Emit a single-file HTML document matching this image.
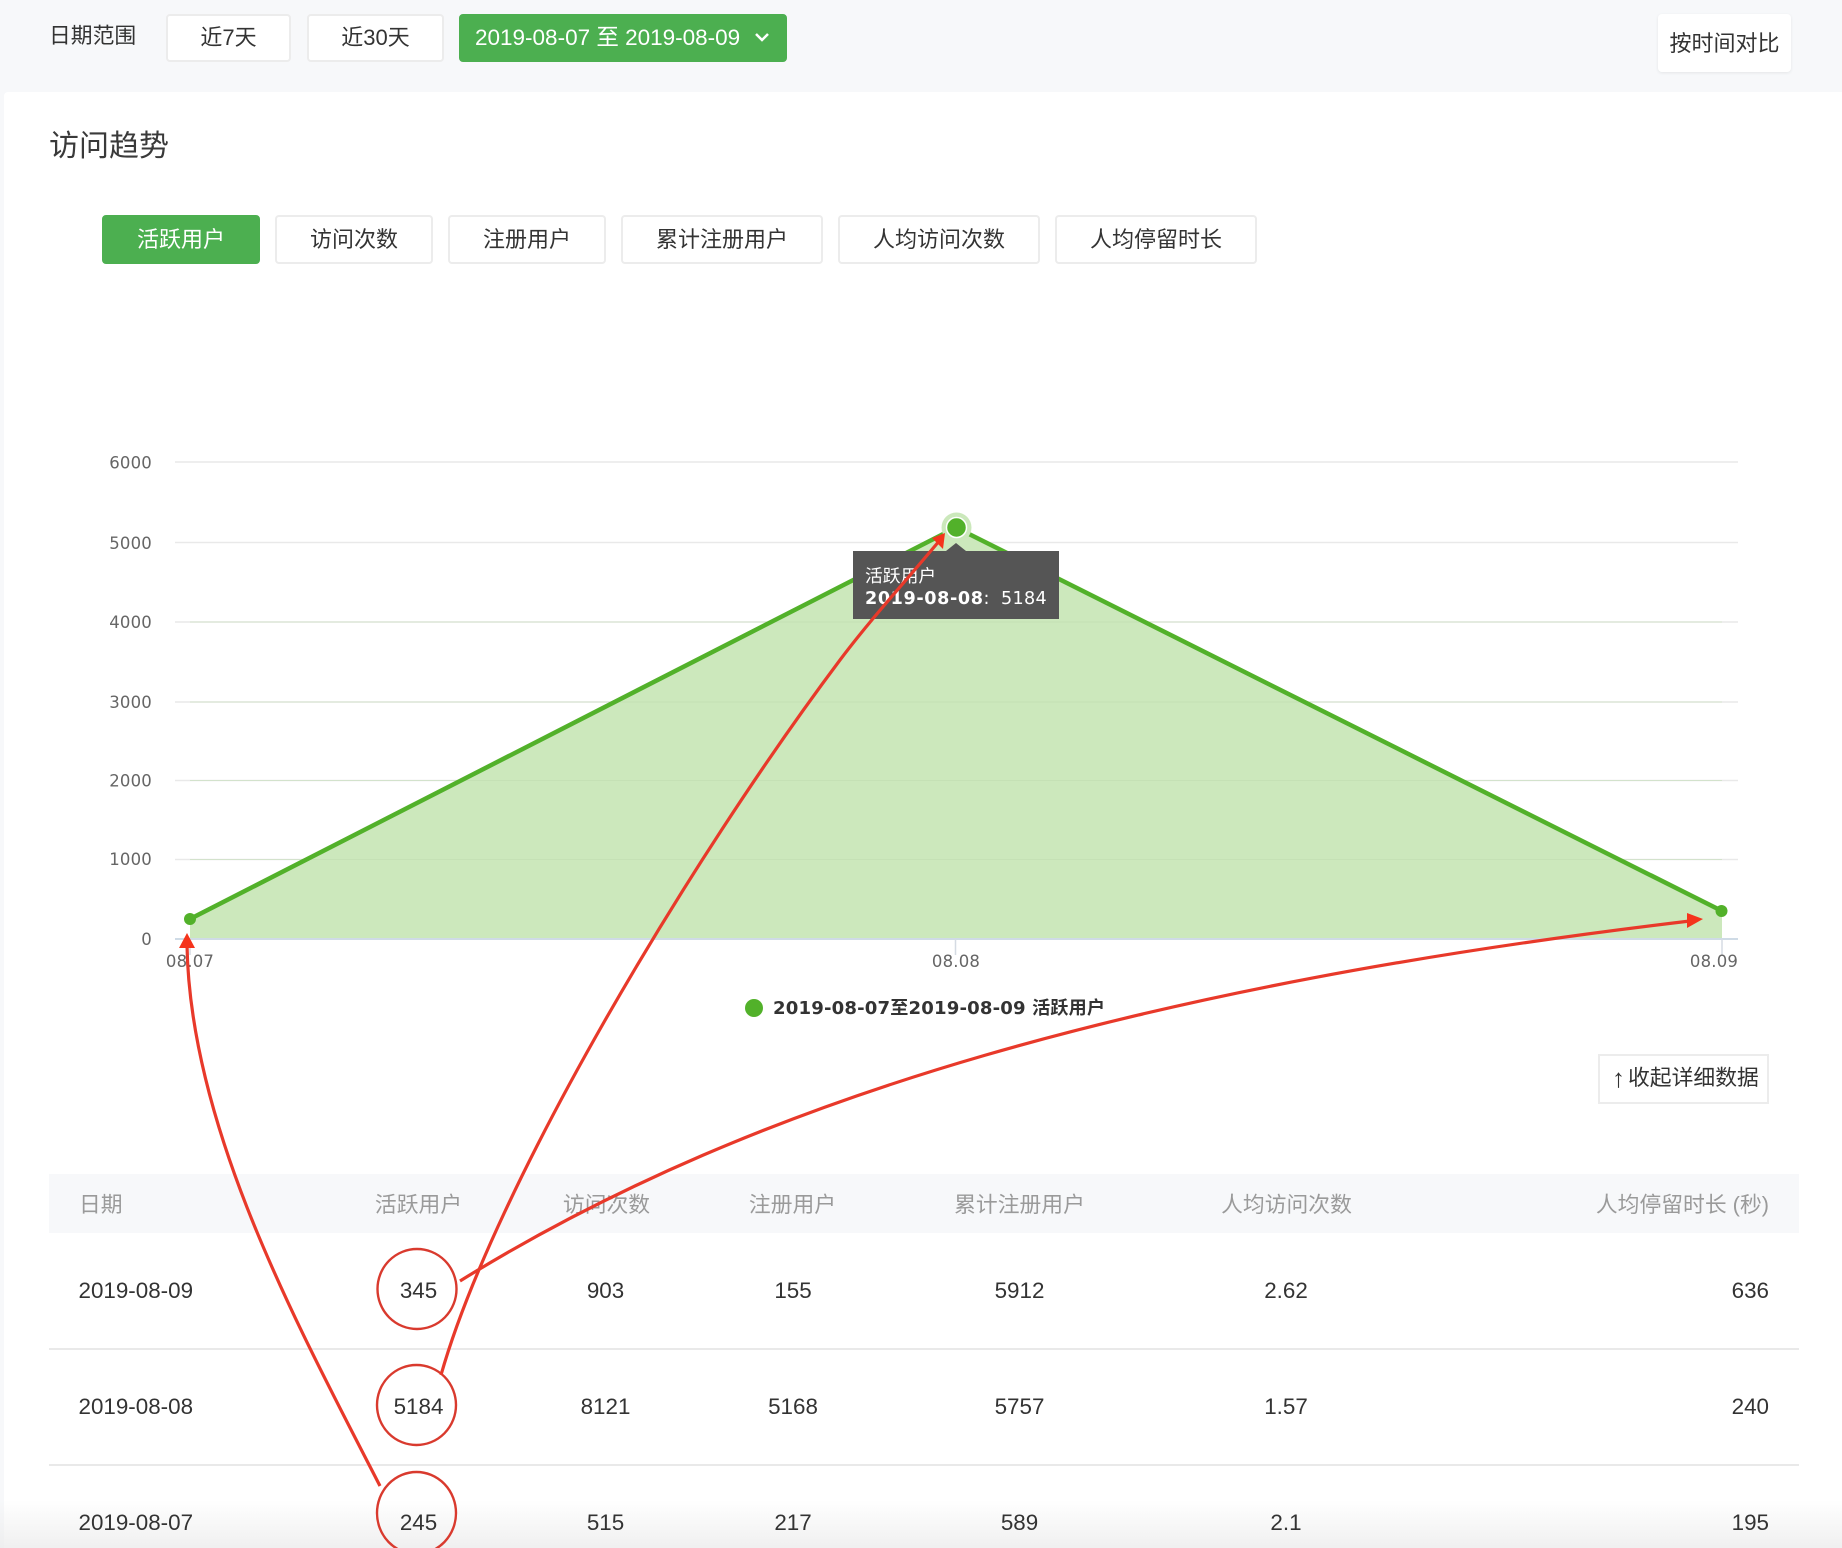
<!DOCTYPE html>
<html lang="zh"><head><meta charset="utf-8"><title>访问趋势</title>
<style>
*{box-sizing:border-box}
html,body{margin:0;padding:0}
body{width:1842px;height:1548px;position:relative;overflow:hidden;background:#f7f8fa;font-family:"Liberation Sans","Noto Sans CJK SC",sans-serif;color:#333}
#panel{position:absolute;left:4px;top:92px;width:1838px;height:1456px;background:#fff;border-radius:4px 0 0 0}
.t{position:absolute;line-height:40px;height:40px;white-space:nowrap}
.c{transform:translateX(-50%)}
.b{position:absolute;background:#fff;border:2px solid #ececec;border-radius:4px;display:flex;align-items:center;justify-content:center;font-size:22px;line-height:44px;color:#333;white-space:nowrap}
.g{background:#4caf50;border-color:#4caf50;color:#fff}
.h{font-size:21.800px;color:#9a9a9a}
.d{font-size:22.400px;color:#333}
.ln{position:absolute;left:49px;width:1750px;height:2px;background:#e9e9e9}
svg{position:absolute;left:0;top:0}
#fade{position:absolute;left:0;top:1500px;width:1842px;height:48px;background:linear-gradient(rgba(240,240,240,0),rgba(236,236,236,.8))}
</style></head><body>
<div id="panel"></div>
<div id="fade"></div>
<div class="t" style="left:49px;top:16px;font-size:21.800px">日期范围</div>
<div class="b" style="left:166px;top:14px;width:125px;height:48px;padding-bottom:1px">近7天</div>
<div class="b" style="left:307px;top:14px;width:137px;height:48px;padding-bottom:1px">近30天</div>
<div class="b g" style="left:459px;top:14px;width:328px;height:48px;justify-content:flex-start;padding-left:14px;padding-bottom:1px;font-size:22.500px">2019-08-07 至 2019-08-09</div>
<svg width="1842" height="80" style="pointer-events:none"><path d="M756 34L762 40L768 34" fill="none" stroke="#fff" stroke-width="2.500"/></svg>
<div class="b" style="left:1658px;top:14px;width:133px;height:58px;font-size:22px;border:0;padding-top:2px;box-shadow:0 1px 3px rgba(0,0,0,.08)">按时间对比</div>
<div class="t" style="left:49px;top:126.500px;font-size:30px;color:#3a3a3a">访问趋势</div>

<div class="b g" style="left:102px;top:215px;width:158px;height:49px">活跃用户</div>
<div class="b" style="left:275px;top:215px;width:158px;height:49px">访问次数</div>
<div class="b" style="left:448px;top:215px;width:158px;height:49px">注册用户</div>
<div class="b" style="left:621px;top:215px;width:202px;height:49px">累计注册用户</div>
<div class="b" style="left:838px;top:215px;width:202px;height:49px">人均访问次数</div>
<div class="b" style="left:1055px;top:215px;width:202px;height:49px">人均停留时长</div>

<svg width="1842" height="1548" font-family="'DejaVu Sans','Noto Sans CJK SC',sans-serif">
<g stroke="#e9e9e9" stroke-width="1.500">
<path d="M175 462H1738M175 542.500H1738M175 622H1738M175 702H1738M175 780.500H1738M175 859.500H1738"/>
</g>
<path d="M190 939V919L956 527.500L1722 911V939Z" fill="#cce8bc"/>
<g stroke="#bfdcb0" stroke-width="1" opacity=".5"><path d="M190 702H1722M190 780.500H1722M190 859.500H1722M190 622H1722"/></g>
<path d="M175 939H1738" stroke="#cfdbe6" stroke-width="2"/>
<path d="M955.500 939V955M1722 939V955M190 939V955" stroke="#d5dbe3" stroke-width="1.500"/>
<path d="M190 919L956 527.500L1722 911" fill="none" stroke="#52b12a" stroke-width="4.500"/>
<circle cx="190" cy="919" r="6" fill="#52b12a"/>
<circle cx="1721.500" cy="911" r="6" fill="#52b12a"/>
<circle cx="956.500" cy="527.500" r="15" fill="#cbe8bb"/>
<circle cx="956.500" cy="527.500" r="10" fill="#52b12a" stroke="#fff" stroke-width="1.500"/>
<g font-size="16.500" fill="#666" text-anchor="end" letter-spacing=".2">
<text x="152" y="468.500">6000</text><text x="152" y="549">5000</text><text x="152" y="628">4000</text><text x="152" y="708">3000</text><text x="152" y="786.500">2000</text><text x="152" y="865">1000</text><text x="152" y="945">0</text>
</g>
<g font-size="16.500" fill="#666" text-anchor="middle" letter-spacing=".2">
<text x="190" y="967">08.07</text><text x="956" y="967">08.08</text><text x="1714" y="967">08.09</text>
</g>
<path d="M946 551L956 543L966 551Z" fill="#555"/>
<rect x="853" y="551" width="206" height="68" fill="#555"/>
<text x="865" y="582" font-size="17.800" fill="#fff">活跃用户</text>
<text x="865" y="604" font-size="17.600" fill="#fff"><tspan font-weight="bold" letter-spacing=".6">2019-08-08</tspan><tspan>:  </tspan><tspan x="1001" letter-spacing=".3">5184</tspan></text>
<circle cx="754" cy="1008" r="9" fill="#52b12a"/>
<text x="773" y="1014" font-size="18.100" font-weight="bold" fill="#333" letter-spacing=".15">2019-08-07至2019-08-09 活跃用户</text>
</svg>

<div class="b" style="left:1598px;top:1054px;width:171px;height:50px;border-radius:0;justify-content:flex-start;padding-left:12px;padding-bottom:2px;font-size:21.800px"><span style="font-size:26px;line-height:40px;margin-right:3px">↑</span>收起详细数据</div>

<div style="position:absolute;left:49px;top:1174px;width:1750px;height:59px;background:#f7f8fa"></div>
<div class="ln" style="top:1348px"></div>
<div class="ln" style="top:1464px"></div>

<div class="t h" style="left:79px;top:1185px">日期</div>
<div class="t h c" style="left:418.500px;top:1185px">活跃用户</div>
<div class="t h c" style="left:606.500px;top:1185px">访问次数</div>
<div class="t h c" style="left:792.500px;top:1185px">注册用户</div>
<div class="t h c" style="left:1019.500px;top:1185px">累计注册用户</div>
<div class="t h c" style="left:1286.500px;top:1185px">人均访问次数</div>
<div class="t h" style="right:73px;top:1185px">人均停留时长 (秒)</div>

<div class="t d" style="left:78.500px;top:1271px">2019-08-09</div>
<div class="t d c" style="left:418.500px;top:1271px">345</div>
<div class="t d c" style="left:605.500px;top:1271px">903</div>
<div class="t d c" style="left:793px;top:1271px">155</div>
<div class="t d c" style="left:1019.500px;top:1271px">5912</div>
<div class="t d c" style="left:1286px;top:1271px">2.62</div>
<div class="t d" style="right:73px;top:1271px">636</div>

<div class="t d" style="left:78.500px;top:1387px">2019-08-08</div>
<div class="t d c" style="left:418.500px;top:1387px">5184</div>
<div class="t d c" style="left:605.500px;top:1387px">8121</div>
<div class="t d c" style="left:793px;top:1387px">5168</div>
<div class="t d c" style="left:1019.500px;top:1387px">5757</div>
<div class="t d c" style="left:1286px;top:1387px">1.57</div>
<div class="t d" style="right:73px;top:1387px">240</div>

<div class="t d" style="left:78.500px;top:1503px">2019-08-07</div>
<div class="t d c" style="left:418.500px;top:1503px">245</div>
<div class="t d c" style="left:605.500px;top:1503px">515</div>
<div class="t d c" style="left:793px;top:1503px">217</div>
<div class="t d c" style="left:1019.500px;top:1503px">589</div>
<div class="t d c" style="left:1286px;top:1503px">2.1</div>
<div class="t d" style="right:73px;top:1503px">195</div>

<svg width="1842" height="1548">
<g fill="none" stroke="#d93a2e" stroke-width="2.400">
<ellipse cx="417" cy="1289" rx="39.500" ry="40"/>
<ellipse cx="416.500" cy="1405" rx="39.500" ry="40"/>
<ellipse cx="416.500" cy="1513" rx="39.500" ry="41"/>
</g>
<g fill="none" stroke="#e8392a" stroke-width="3.200">
<path d="M380 1486C300 1330 190 1130 187 945"/>
<path d="M441 1375C495 1185 690 860 840 660C870 620 905 582 940 540"/>
<path d="M460 1281C760 1095 1150 985 1690 921"/>
</g>
<g fill="#f5341c">
<path d="M187 933L195 948H179Z"/>
<path d="M945 533L943 549L932 538Z"/>
<path d="M1703 919L1687 928L1687 913Z"/>
</g>
</svg>
</body></html>
